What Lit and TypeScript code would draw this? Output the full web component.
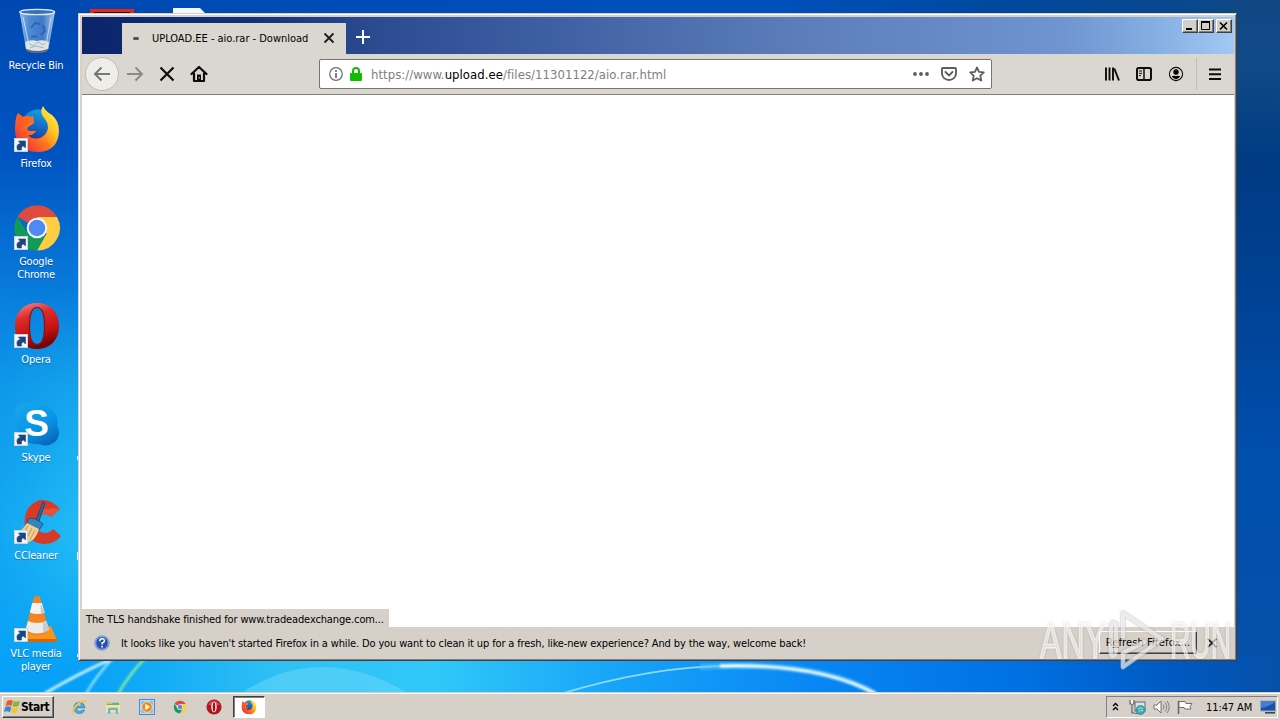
import {css, html, LitElement, svg} from 'lit';
import {customElement, property} from 'lit/decorators.js';

const shortcutBadge = svg`
  <rect x="1.500" y="32.500" width="13" height="13" fill="#f4f6f8" stroke="#c9d3dc"/>
  <path d="M4.500 44Q2.500 38 7.500 37.500L5.500 35H12.500V42L10.500 40Q7.500 40.500 8.500 44z" fill="#1c4580" stroke="#1c4580" stroke-width=".6"/>
`;

const firefoxArt = svg`
  <defs>
    <linearGradient id="ff-body" x1=".9" y1=".1" x2=".15" y2=".8">
      <stop offset="0" stop-color="#fff04a"/><stop offset=".35" stop-color="#ffc022"/>
      <stop offset=".62" stop-color="#ff7a1c"/><stop offset="1" stop-color="#f03838"/>
    </linearGradient>
    <linearGradient id="ff-globe" x1=".6" y1="0" x2=".3" y2="1">
      <stop offset="0" stop-color="#10a4e0"/><stop offset=".5" stop-color="#1668c8"/><stop offset="1" stop-color="#203080"/>
    </linearGradient>
  </defs>
  <circle cx="25" cy="20" r="16.500" fill="url(#ff-globe)"/>
  <path d="M5 7L10 11Q15 9 18 11L20 10 21 17Q18 19 15 21 13 24 17 25H23Q20 30 15 29 19 34 27 32 34 29 35 22 35 16 31 12 26 6 30 0 33 6 39 9 46 15 46 25 45 46 24 46 2 45 2 23 2 12 5 7z" fill="url(#ff-body)"/>
  <path d="M5 7L10 11Q15 9 18 11L20 10 21 17Q12 16 7 24 3 20 5 7z" fill="#f8502c" opacity=".6"/>
`;

const chromeArt = svg`
  <path d="M24 24L4.500 12.700A22.500 22.500 0 0 1 44 13z" fill="#dc4b3e"/>
  <path d="M24 13h20A22.500 22.500 0 0 1 24 46.500L33.500 29.500z" fill="#ffcd40"/>
  <path d="M4.500 12.700L14.500 29.500 24 34 33.500 29.500 24 46.500A22.500 22.500 0 0 1 4.500 12.700z" fill="#109c58"/>
  <circle cx="24" cy="24" r="10.300" fill="#f4f6f8"/>
  <circle cx="24" cy="24" r="8.300" fill="#4f8af4"/>
`;

const operaArt = svg`
  <defs>
    <linearGradient id="op-ring" x1="0" y1="0" x2=".3" y2="1">
      <stop offset="0" stop-color="#f09090"/><stop offset=".35" stop-color="#dc2c2c"/>
      <stop offset=".75" stop-color="#c41010"/><stop offset="1" stop-color="#7c0404"/>
    </linearGradient>
  </defs>
  <path fill-rule="evenodd" d="M24 1C38 1 46 11 46 24S38 47 24 47 2 37 2 24 10 1 24 1zm0 4.500c-6 0-7.500 8-7.500 18.500S18 42.500 24 42.500 31.500 34.500 31.500 24 30 5.500 24 5.500z" fill="url(#op-ring)"/>
  <path d="M24 5.500c-6 0-7.500 8-7.500 18.500S18 42.500 24 42.500 31.500 34.500 31.500 24 30 5.500 24 5.500z" fill="none" stroke="#8a1010" stroke-width="1.200"/>
`;

const desktopArt: Record<string, unknown> = {
  bin: svg`
    <defs>
      <linearGradient id="bin-glass" x1="0" x2="1">
        <stop offset="0" stop-color="#b8d4f0"/><stop offset=".25" stop-color="#5f96d8"/>
        <stop offset=".65" stop-color="#4a80cc"/><stop offset="1" stop-color="#c4dcf4"/>
      </linearGradient>
    </defs>
    <g transform="translate(0 -2)">
      <path d="M6.500 6L13 43q10 5 22.500 0L42 6z" fill="url(#bin-glass)" opacity=".85"/>
      <path d="M12 36q6-3 12-1 6-2 12 1l-1 7q-10 4-22 0z" fill="#dce4e8"/>
      <path d="M15 37l5 3 5-4 5 3 4-3M17 42l6-2 8 2" stroke="#a8b4bc" fill="none"/>
      <path d="M13 43q11 5 22 0l-1 2.500q-10 3-20 0z" fill="#786c60"/>
      <ellipse cx="24.200" cy="6" rx="17.500" ry="2.700" fill="#3a70b8" stroke="#dcebf8" stroke-width="1.300"/>
      <path d="M10 11l6 28M38 11l-5 28" stroke="#e4f0fc" opacity=".7"/>
      <path d="M18 22l4-5 5 1M30 19l2 6-4 4M24 30l-6 1" stroke="#2458a8" stroke-width="2" fill="none" opacity=".7"/>
    </g>
  `,
  firefox: svg`${firefoxArt}${shortcutBadge}`,
  chrome: svg`${chromeArt}${shortcutBadge}`,
  opera: svg`${operaArt}${shortcutBadge}`,
  skype: svg`
    <defs>
      <linearGradient id="sk-cloud" x1=".1" y1="0" x2=".7" y2="1">
        <stop offset="0" stop-color="#18a8ec"/><stop offset=".6" stop-color="#0894e4"/><stop offset="1" stop-color="#0668c0"/>
      </linearGradient>
    </defs>
    <path d="M14 3q6 0 8 1 16-1 22 13 1 5 0 8 5 10-2 17-8 6-16 2-14 2-21-12-2-6-1-10Q-1 12 5 6q4-3 9-3z" fill="url(#sk-cloud)"/>
    <text class="skype-mark" x="23.500" y="35.500" text-anchor="middle">S</text>
    ${shortcutBadge}
  `,
  ccleaner: svg`
    <path d="M47 11L38 19q-4-4-9-2-7 3-6 11 2 7 9 7 5 0 8-4l8 7q-6 8-17 8-16-1-19-16Q9 8 27 2q12-1 20 9z" fill="#d83a28"/>
    <path d="M47 11L38 19q-4-4-9-2l-3-4q10-4 21-2z" fill="#e85c40" opacity=".7"/>
    <path d="M30 4l2 1-6 18-3-1z" fill="#286ca4" stroke="#184c80"/>
    <path d="M15 21q5-3 15 5l-4 6q-5-4-12-5z" fill="#3484bc" stroke="#1c5484"/>
    <path d="M14 25l12 6q-3 12-13 14L1 37q8-4 13-12z" fill="#f0d090"/>
    <path d="M15 28L8 38M19 30l-6 12M22 32l-5 10" stroke="#c49850"/>
    ${shortcutBadge}
  `,
  vlc: svg`
    <path d="M14 30h24l6 14H12z" fill="#f89418"/>
    <path d="M12 43h32v3H13z" fill="#d86404"/>
    <path d="M21 1q3-2 6 0l9 34q-6 5-14 4-6-1-10-4z" fill="#f48420"/>
    <path d="M19.300 7h9.500l3 9.500q-7.500 3-15 0z" fill="#f2f2f0"/>
    <path d="M15 25q9 4 18.500 0l2.500 9q-12 7-23.500 0z" fill="#ececea"/>
    <path d="M27.500 7l4.300 9.500-4 1zM30 26l3.500-1 2.500 9-6 3z" fill="#c8ccd0"/>
    ${shortcutBadge}
  `,
};

const DESKTOP_ITEMS = [
  {art: 'bin', lines: ['Recycle Bin']},
  {art: 'firefox', lines: ['Firefox']},
  {art: 'chrome', lines: ['Google', 'Chrome']},
  {art: 'opera', lines: ['Opera']},
  {art: 'skype', lines: ['Skype']},
  {art: 'ccleaner', lines: ['CCleaner']},
  {art: 'vlc', lines: ['VLC media', 'player']},
];

/** Column of shortcuts down the left edge of the desktop. */
@customElement('desktop-icons')
export class DesktopIcons extends LitElement {
  render() {
    return DESKTOP_ITEMS.map(
      ({art, lines}) => html`
        <div class="item">
          <svg viewBox="0 0 48 48" width="48" height="48">${desktopArt[art]}</svg>
          <div class="label">${lines.map((line) => html`<span>${line}</span>`)}</div>
        </div>
      `,
    );
  }

  static styles = css`
    :host {
      display: flex;
      flex-direction: column;
      width: 72px;
      padding-top: 8px;
    }

    .item {
      display: flex;
      flex: none;
      flex-direction: column;
      align-items: center;
      gap: 3px;
      height: 98px;
    }

    svg {
      flex: none;
      margin-left: 2px;
    }

    .label {
      display: flex;
      flex-direction: column;
      align-items: center;
      color: #fff;
      font: 11px/13px "DejaVu Sans Condensed", "DejaVu Sans", sans-serif;
      letter-spacing: -0.2px;
      white-space: nowrap;
      text-shadow: 0 1px 1px rgba(0, 30, 90, 0.4);
    }

    .skype-mark {
      font: bold 37px "Liberation Sans", sans-serif;
      fill: #fff;
    }
  `;
}

/** Browser window: title strip with one tab, navigation bar, page, notification bar. */
@customElement('browser-window')
export class BrowserWindow extends LitElement {
  @property() tabTitle = '';

  render() {
    return html`
      <div class="titlebar">
        <div class="tab">
          <i class="throbber"></i>
          <span class="tab-title">${this.tabTitle}</span>
          <svg class="tab-close" width="12" height="12" viewBox="0 0 12 12"><path d="M1.500 1.500l9 9M10.500 1.500l-9 9" stroke="#1c1c1c" stroke-width="1.800"/></svg>
        </div>
        <svg class="new-tab" width="16" height="16" viewBox="0 0 16 16"><path d="M8 1v14M1 8h14" stroke="#fff" stroke-width="2"/></svg>
        <div class="controls">
          <div class="control"><svg width="14" height="12"><path d="M3 9h6" stroke="#000" stroke-width="2"/></svg></div>
          <div class="control"><svg width="14" height="12"><path d="M2.500 2v7.500h8V2" stroke="#000" fill="none"/><path d="M2 2h9" stroke="#000" stroke-width="2"/></svg></div>
          <div class="control close"><svg width="14" height="12"><path d="M3 2.500l7 7M10 2.500l-7 7" stroke="#000" stroke-width="1.600"/></svg></div>
        </div>
      </div>

      <div class="toolbar">
        <div class="back"><svg width="18" height="16" viewBox="0 0 18 16"><path d="M17 8H2M8.500 1.500L2 8l6.500 6.500" stroke="#777" stroke-width="2" fill="none"/></svg></div>
        <svg class="forward" width="18" height="16" viewBox="0 0 18 16"><path d="M1 8h15M9.500 1.500L16 8l-6.500 6.500" stroke="#8c8a86" stroke-width="2" fill="none"/></svg>
        <svg class="stop" width="16" height="16" viewBox="0 0 16 16"><path d="M1.500 1.500l13 13M14.500 1.500l-13 13" stroke="#0c0c0c" stroke-width="2.200"/></svg>
        <svg class="home" width="18" height="18" viewBox="0 0 18 18">
          <path d="M1.500 9L9 2l7.500 7M4 8.500V16h10V8.500" stroke="#0c0c0c" stroke-width="2.200" fill="none" stroke-linecap="round" stroke-linejoin="round"/>
          <path d="M7 9.500h4V16H7z" fill="#0c0c0c"/><path d="M9.200 12v1.500" stroke="#ddd"/>
        </svg>

        <div class="urlbar">
          <svg width="14" height="14" viewBox="0 0 14 14"><circle cx="7" cy="7" r="6.300" fill="none" stroke="#6c6c6c" stroke-width="1.200"/><path d="M7 3v2M7 6v5" stroke="#6c6c6c" stroke-width="1.700"/></svg>
          <svg class="lock" width="12" height="14" viewBox="0 0 12 14"><path d="M3 7V4a3 3 0 0 1 6 0v3" fill="none" stroke="#12bc00" stroke-width="2"/><rect y="6" width="12" height="8" rx="1" fill="#12bc00"/></svg>
          <span class="url">https://www.<b>upload.ee</b>/files/11301122/aio.rar.html</span>
          <svg class="dots" width="16" height="6" viewBox="0 0 16 6"><circle cx="2" cy="3" r="1.900"/><circle cx="8" cy="3" r="1.900"/><circle cx="14" cy="3" r="1.900"/></svg>
          <svg width="16" height="14" viewBox="0 0 16 14"><path d="M2 1h12q1 0 1 1v4.500a7 6.500 0 0 1-14 0V2q0-1 1-1z" fill="none" stroke="#5e5e5e" stroke-width="1.900"/><path d="M4.500 5L8 8.500 11.500 5" fill="none" stroke="#5e5e5e" stroke-width="1.900" stroke-linecap="round"/></svg>
          <svg width="16" height="16" viewBox="0 0 16 16"><path d="M8 1.500l2 4.300 4.800.6-3.500 3.300.9 4.800L8 12.200l-4.200 2.300.9-4.800L1.200 6.400 6 5.800z" fill="none" stroke="#5e5e5e" stroke-width="1.800" stroke-linejoin="round"/></svg>
        </div>

        <div class="tools">
          <svg width="16" height="16" viewBox="0 0 16 16"><path d="M2 1.500v13M5.500 1.500v13M9 1.500v13" stroke="#0c0c0c" stroke-width="1.900"/><path d="M10.300 2.500l4.700 12" stroke="#0c0c0c" stroke-width="1.900"/></svg>
          <svg width="16" height="14" viewBox="0 0 16 14"><rect x="1" y="1" width="14" height="12" rx="1.800" fill="none" stroke="#0c0c0c" stroke-width="2"/><path d="M8 1v12" stroke="#0c0c0c" stroke-width="1.500"/><path d="M3 4h3M3 6.300h3M3 8.600h2" stroke="#0c0c0c"/></svg>
          <svg width="16" height="16" viewBox="0 0 16 16"><circle cx="8" cy="8" r="6.600" fill="none" stroke="#0c0c0c" stroke-width="1.100"/><circle cx="8" cy="6" r="2.700"/><path d="M3.800 10.300q1.700-.8 2.700-.5 1.500.8 3 0 1-.3 2.700.5-1.400 2.900-4.200 2.900t-4.200-2.900z"/></svg>
          <i class="divider"></i>
          <svg width="12" height="12" viewBox="0 0 12 12"><path d="M0 1.500h12M0 6.200h12M0 11h12" stroke="#0c0c0c" stroke-width="2"/></svg>
        </div>
      </div>

      <div class="page"><div class="status">The TLS handshake finished for www.tradeadexchange.com...</div></div>

      <div class="notice">
        <svg width="16" height="16" viewBox="0 0 16 16">
          <circle cx="8" cy="8" r="7.300" fill="#2450b0" stroke="#8ca8dc"/>
          <circle cx="8" cy="8" r="6.300" fill="none" stroke="#e4ecf8" stroke-width=".6"/>
          <path d="M5.700 6.200q.1-2.400 2.400-2.400t2.300 2Q10.400 7.500 8.100 8v1.500" fill="none" stroke="#fff" stroke-width="1.500"/><path d="M8.100 10.700v1.700" stroke="#fff" stroke-width="1.600"/>
        </svg>
        <span class="message">It looks like you haven't started Firefox in a while. Do you want to clean it up for a fresh, like-new experience? And by the way, welcome back!</span>
        <div class="refresh">R<u>e</u>fresh Firefox...</div>
        <svg class="dismiss" width="10" height="10" viewBox="0 0 10 10"><path d="M.8.8l8.400 8.400M9.200.8L.8 9.200" stroke="#222" stroke-width="1.700"/></svg>
      </div>
    `;
  }

  static styles = css`
    :host {
      display: flex;
      flex-direction: column;
      box-sizing: border-box;
      padding: 2px;
      border: 1px solid;
      border-color: #d4d0c8 #404040 #404040 #d4d0c8;
      background: #d6d0c9;
      box-shadow: inset 1px 1px #fff, inset -1px -1px #808080;
      color: #000;
      font: 11px/13px "DejaVu Sans Condensed", "DejaVu Sans", sans-serif;
      white-space: nowrap;
    }

    svg {
      flex: none;
      display: block;
    }

    .titlebar {
      display: flex;
      height: 37px;
      margin: 1px 0 0 1px;
      background: linear-gradient(90deg, #0b256c 0, #14307a 15%, #2b4a90 25%, #3e5ea2 40%, #5c7dba 62%, #6f94cf 85%, #84aee2 93%, #a2c8f4 100%);
    }

    .tab {
      display: flex;
      align-items: center;
      box-sizing: border-box;
      width: 224px;
      margin: 6px 0 0 40px;
      padding: 0 11px 1px 11px;
      background: #dad7d1;
    }

    .throbber {
      width: 6px;
      height: 3px;
      border-radius: 2px;
      background: #555;
    }

    .tab-title {
      flex: 1;
      margin-left: 13px;
      letter-spacing: -0.02px;
    }

    .new-tab {
      margin: 12px 0 0 9px;
    }

    .controls {
      display: flex;
      margin: 2px 2px 0 auto;
    }

    .control {
      box-sizing: border-box;
      width: 16px;
      height: 14px;
      border: 1px solid;
      border-color: #fff #404040 #404040 #fff;
      background: #d4d0c8;
      box-shadow: inset -1px -1px #808080;
    }

    .close {
      margin-left: 2px;
    }

    .toolbar {
      display: flex;
      align-items: center;
      box-sizing: border-box;
      height: 41px;
      margin-left: 1px;
      padding-left: 3px;
      border-bottom: 1px solid #817c76;
      background: #dad7d1;
    }

    .back {
      display: flex;
      align-items: center;
      justify-content: center;
      box-sizing: border-box;
      width: 34px;
      height: 34px;
      border: 1px solid #bfbcb6;
      border-radius: 50%;
      background: #efedea;
    }

    .forward {
      margin-left: 7px;
    }

    .stop {
      margin-left: 15px;
    }

    .home {
      margin-left: 15px;
    }

    .urlbar {
      display: flex;
      align-items: center;
      gap: 12px;
      box-sizing: border-box;
      width: 673px;
      height: 30px;
      margin-left: 111px;
      padding: 0 6px 0 9px;
      border: 1px solid #77736d;
      border-radius: 2px;
      background: #fff;
    }

    .lock {
      margin: 0 -3px 0 -5px;
    }

    .url {
      flex: 1;
      padding-top: 1px;
      color: #808080;
      font-size: 13px;
      line-height: 16px;
      letter-spacing: 0.04px;
    }

    .url b {
      color: #000;
      font-weight: normal;
    }

    .dots {
      fill: #5e5e5e;
    }

    .tools {
      display: flex;
      align-items: center;
      gap: 16px;
      margin-left: auto;
      padding-right: 13px;
    }

    .divider {
      width: 1px;
      height: 32px;
      margin: 0 -4px 0 -4px;
      background: #c0bcb6;
    }

    .page {
      display: flex;
      flex: 1;
      align-items: flex-end;
      margin-left: 1px;
      background: #fff;
    }

    .status {
      box-sizing: border-box;
      width: 307px;
      height: 18px;
      padding: 4px 0 0 4px;
      background: #d6d0c9;
      letter-spacing: -0.13px;
    }

    .notice {
      display: flex;
      align-items: center;
      box-sizing: border-box;
      height: 31px;
      padding: 0 17px 0 13px;
    }

    .message {
      flex: 1;
      margin-left: 11px;
      padding-top: 2px;
      letter-spacing: -0.138px;
    }

    .refresh {
      box-sizing: border-box;
      width: 98px;
      height: 23px;
      padding-top: 4px;
      border: 1px solid;
      border-color: #fff #404040 #404040 #fff;
      box-shadow: inset -1px -1px #808080;
      text-align: center;
      letter-spacing: 0.1px;
    }

    .dismiss {
      margin-left: 10px;
    }
  `;
}

const launchers: unknown[] = [
  svg`
    <path d="M42 27H17q1 10 9 10 5 0 7-4h8q-4 11-16 11Q9 43 8 27 8 11 25 9q16 1 17 18zM17 21h16q-1-7-8-7-7 1-8 7z" fill="#48a8e4" stroke="#1c78bc" stroke-width="1.500" fill-rule="evenodd"/>
    <path d="M6 45Q-2 38 10 22 26 3 41 3q7 2 2 11 0-5-5-5-12 2-24 17Q5 39 9 42q4 2 9-2-6 7-12 5z" fill="#f4c83c"/>
  `,
  svg`
    <path d="M3 8h15l3 4h22v28H3z" fill="#e8c868"/>
    <path d="M6 14h14l3-3h19v8H6z" fill="#5cb878"/>
    <path d="M3 18h42v22H3z" fill="#f8e498"/>
    <path d="M9 45V29q0-3 3-3h24q3 0 3 3v16h-7V33H16v12z" fill="#6cb4e0"/>
  `,
  svg`
    <rect x="1.500" y="1.500" width="45" height="45" fill="#b8d8f4" stroke="#4c8cd0" stroke-width="3"/>
    <rect x="7" y="7" width="34" height="34" fill="#7cb4e8"/>
    <circle cx="24" cy="24" r="16" fill="#f48810" stroke="#fff" stroke-width="2"/>
    <path d="M19 14l14 10-14 10z" fill="#fff"/>
  `,
  svg`<g transform="translate(4 4) scale(.84)">${chromeArt}</g>`,
  svg`
    <circle cx="24" cy="24" r="22" fill="#b81420" stroke="#881018"/>
    <path d="M7 18q4-12 17-13 13 1 17 13z" fill="#e86c6c" opacity=".6"/>
    <ellipse cx="24" cy="24" rx="8" ry="16" fill="#fff"/><ellipse cx="24" cy="24" rx="4" ry="14" fill="#a81018"/>
  `,
];

@customElement('task-bar')
export class TaskBar extends LitElement {
  @property() clock = '';

  render() {
    return html`
      <div class="start">
        <svg width="17" height="16" viewBox="0 0 17 16">
          <path d="M3 2q3-2 6-.3L7.500 7Q5 5.500 1.500 7z" fill="#ec5c28"/><path d="M10 2q3 1.500 6-.2L14.500 7q-3 1.500-6 .2z" fill="#7cbc30"/>
          <path d="M1.200 8.200Q4 6.500 7.200 8.200L6 13.200q-3-1.800-6-.2z" fill="#3c84d8"/><path d="M8.200 8.500q3 1.500 6 .1L13 13.500q-3 1.500-6 .1z" fill="#f8c428"/>
        </svg>
        <span>Start</span>
      </div>
      <div class="launchers">
        ${launchers.map((art) => html`<svg width="16" height="16" viewBox="0 0 48 48">${art}</svg>`)}
      </div>
      <div class="running"><svg width="16" height="16" viewBox="0 0 48 48">${firefoxArt}</svg></div>
      <div class="tray">
        <svg class="expand" width="7" height="9" viewBox="0 0 7 9"><path d="M1 4l2.500-2.500L6 4M1 8l2.500-2.500L6 8" fill="none" stroke="#000" stroke-width="1.400"/></svg>
        <svg class="network" width="17" height="16" viewBox="0 0 17 16">
          <path d="M1 1v4h4V1M3 5v9h3" fill="none" stroke="#666" stroke-width="1.200"/><path d="M2 1v3.500h2V1z" fill="#fff"/>
          <rect x="6" y="3" width="10" height="9" fill="#d8e4e8" stroke="#606870"/><path d="M6 14.500h6" stroke="#606870"/>
          <circle cx="11.500" cy="11" r="4.500" fill="#3ca8b4" stroke="#287884" stroke-width=".6"/><path d="M9 10q3-3 5 0M9.500 13q2-3 4.500-1" stroke="#b4e8e8" fill="none"/>
        </svg>
        <svg class="volume" width="17" height="14" viewBox="0 0 17 14"><path d="M1 5h3l4-4v12L4 9H1z" fill="#fff" stroke="#707070"/><path d="M10 4.500q2 2.500 0 5M12 2.500q3.500 4.500 0 9M14 1q4.500 6 0 12" fill="none" stroke="#808080"/></svg>
        <svg class="flag" width="16" height="15" viewBox="0 0 16 15"><path d="M1.500 14V1" stroke="#666" stroke-width="1.500"/><path d="M2 1.500h6l1 2h6l-2 3 1 2.500H8l-1-1.500H2z" fill="#fff" stroke="#707070"/></svg>
        <span class="clock">${this.clock}</span>
        <svg width="16" height="14" viewBox="0 0 16 14"><rect x=".5" y="1" width="15" height="10" fill="#1c50a8" stroke="#98a8b8"/><path d="M1 8Q8 7 15 2v-.5H1z" fill="#4080d8"/><path d="M5 12.800h10" stroke="#384858" stroke-width="1.600"/></svg>
      </div>
    `;
  }

  static styles = css`
    :host {
      display: flex;
      box-sizing: border-box;
      height: 28px;
      padding: 3px 2px 2px;
      border-top: 1px solid #d4d0c8;
      background: #d6d0c8;
      box-shadow: inset 0 1px #fff;
      font: 11px/13px "DejaVu Sans Condensed", "DejaVu Sans", sans-serif;
    }

    svg {
      flex: none;
      display: block;
    }

    .start {
      display: flex;
      align-items: center;
      box-sizing: border-box;
      width: 52px;
      height: 22px;
      padding-left: 1px;
      border: 1px solid;
      border-color: #fff #404040 #404040 #fff;
      box-shadow: inset -1px -1px #808080;
      font-size: 12px;
      font-weight: bold;
      letter-spacing: -0.5px;
    }

    .launchers {
      display: flex;
      align-items: center;
      gap: 17.800px;
      margin: 0 11px 0 17px;
    }

    .running {
      display: flex;
      align-items: center;
      justify-content: center;
      box-sizing: border-box;
      width: 32px;
      height: 22px;
      border: 1px solid;
      border-color: #404040 #fff #fff #404040;
      background: #fff;
      box-shadow: inset 1px 1px #808080;
    }

    .tray {
      display: flex;
      align-items: center;
      box-sizing: border-box;
      width: 172px;
      height: 22px;
      margin-left: auto;
      padding: 0 1px 0 5px;
      border: 1px solid;
      border-color: #808080 #fff #fff #808080;
    }

    .expand {
      margin-bottom: 2px;
    }

    .network {
      margin-left: 10px;
    }

    .volume {
      margin-left: 7px;
    }

    .flag {
      margin-left: 7px;
    }

    .clock {
      flex: 1;
      margin-left: 13px;
      white-space: nowrap;
      letter-spacing: -0.1px;
    }
  `;
}

@customElement('app-root')
export class AppRoot extends LitElement {
  #wallpaper() {
    return html`
      <svg class="wallpaper" width="1280" height="720" viewBox="0 0 1280 720">
        <defs>
          <linearGradient id="sky-left" x1="0" y1="0" x2="0" y2="1">
            <stop offset="0" stop-color="#0048b0"/><stop offset=".22" stop-color="#0054c2"/>
            <stop offset=".4" stop-color="#0878da"/><stop offset=".55" stop-color="#0e98ea"/>
            <stop offset=".75" stop-color="#14a8f2"/><stop offset="1" stop-color="#06a0f8"/>
          </linearGradient>
          <linearGradient id="sky-left-glow" x1="0" x2="1">
            <stop offset="0" stop-color="#30d0f8" stop-opacity="0"/><stop offset="1" stop-color="#30d0f8" stop-opacity=".5"/>
          </linearGradient>
          <linearGradient id="glow-fade" x1="0" y1="0" x2="0" y2="1">
            <stop offset=".4" stop-color="#000"/><stop offset=".75" stop-color="#fff"/><stop offset=".93" stop-color="#000"/>
          </linearGradient>
          <mask id="lower"><rect width="80" height="720" fill="url(#glow-fade)"/></mask>
          <linearGradient id="sky-bottom" x1="0" x2="1">
            <stop offset=".06" stop-color="#06a0f8"/><stop offset=".12" stop-color="#12acf6"/>
            <stop offset=".22" stop-color="#30c0f4"/><stop offset=".34" stop-color="#30c8f8"/>
            <stop offset=".48" stop-color="#18a4f8"/><stop offset=".64" stop-color="#0886f4"/>
            <stop offset=".8" stop-color="#0070e2"/><stop offset=".92" stop-color="#0058c0"/>
            <stop offset="1" stop-color="#0650a8"/>
          </linearGradient>
          <linearGradient id="sky-top" x1="0" x2="1">
            <stop offset="0" stop-color="#0048b0"/><stop offset=".6" stop-color="#0050bc"/>
            <stop offset=".8" stop-color="#00489c"/><stop offset="1" stop-color="#104884"/>
          </linearGradient>
          <linearGradient id="sky-right" x1="0" y1="0" x2="0" y2="1">
            <stop offset="0" stop-color="#104884"/><stop offset=".1" stop-color="#104a86"/>
            <stop offset=".24" stop-color="#003a82"/><stop offset=".5" stop-color="#00449a"/>
            <stop offset=".7" stop-color="#0050ae"/><stop offset="1" stop-color="#0650a8"/>
          </linearGradient>
          <filter id="soft"><feGaussianBlur stdDeviation="1"/></filter>
        </defs>
        <rect width="1280" height="20" fill="url(#sky-top)"/>
        <rect x="1230" width="50" height="665" fill="url(#sky-right)"/>
        <rect y="655" width="1280" height="45" fill="url(#sky-bottom)"/>
        <rect width="80" height="700" fill="url(#sky-left)"/>
        <rect width="80" height="700" fill="url(#sky-left-glow)" mask="url(#lower)"/>
        <path d="M240 694Q320 640 410 694z" fill="#70dcfa" opacity=".45"/>
        <g fill="none" filter="url(#soft)">
          <path d="M44 694Q75 675 116 657" stroke="#c8f4ff" stroke-width="3"/>
          <path d="M86 694Q96 676 114 657" stroke="#8ce4fc" stroke-width="2.500"/>
          <path d="M118 694Q128 676 146 657" stroke="#8cf098" stroke-width="2.500"/>
        </g>
        <path d="M560 694Q660 664 742 666" stroke="#8cdcff" stroke-width="1.800" fill="none"/>
        <path d="M700 667Q820 660 876 694" stroke="#58c8ff" stroke-width="6" opacity=".6" fill="none" filter="url(#soft)"/>
        <path d="M720 666Q820 663 876 694" stroke="#fff" stroke-width="2.800" fill="none" filter="url(#soft)"/>
        <path d="M90 9h44v5H90z" fill="#e02818"/><path d="M94 12h36v2H94z" fill="#301018"/>
        <path d="M173 8h27l6 6h-33z" fill="#f4f8fc"/>
        <path d="M77 456h1v4h-1zM77 552h1v8h-1zM77 654h1v3h-1z" fill="#e8f6ff"/>
      </svg>
    `;
  }

  #watermark() {
    return html`
      <svg class="watermark" width="210" height="68" viewBox="0 0 210 68">
        <text class="mark" x="2" y="51" textLength="66" lengthAdjust="spacingAndGlyphs">ANY</text>
        <text class="mark" x="132" y="51" textLength="61" lengthAdjust="spacingAndGlyphs">RUN</text>
        <path class="play-edge" d="M73 20V46Q73 51 77 48M85 30V6L124 32 85 60V46L106 35M73 20Q74 13 78 17V44"/>
        <path class="play" d="M73 20V46Q73 51 77 48M85 30V6L124 32 85 60V46L106 35M73 20Q74 13 78 17V44"/>
      </svg>
    `;
  }

  render() {
    return html`
      ${this.#wallpaper()}
      <desktop-icons></desktop-icons>
      <browser-window class="window" tabTitle="UPLOAD.EE - aio.rar - Download"></browser-window>
      ${this.#watermark()}
      <task-bar clock="11:47 AM"></task-bar>
    `;
  }

  static styles = css`
    :host {
      position: relative;
      display: flex;
      flex-direction: column;
      width: 1280px;
      height: 720px;
      overflow: hidden;
    }

    .wallpaper {
      position: absolute;
      inset: 0;
    }

    desktop-icons,
    task-bar {
      position: relative;
    }

    desktop-icons {
      flex: 1 1 0;
      min-height: 0;
    }

    task-bar {
      flex: none;
    }

    .window {
      position: absolute;
      left: 78px;
      top: 13px;
      width: 1159px;
      height: 648px;
    }

    .watermark {
      position: absolute;
      left: 1038px;
      top: 607px;
      filter: drop-shadow(0 0 1px rgba(0, 0, 0, 0.2));
    }

    .mark {
      fill: rgba(255, 255, 255, 0.55);
      stroke: rgba(255, 255, 255, 0.55);
      stroke-width: 1.800px;
      font: 50px "Liberation Sans Narrow", "Liberation Sans", sans-serif;
    }

    .play,
    .play-edge {
      fill: none;
      stroke: rgba(255, 255, 255, 0.55);
      stroke-width: 4px;
      stroke-linejoin: round;
      stroke-linecap: round;
    }

    .play-edge {
      stroke: rgba(200, 200, 200, 0.4);
      stroke-width: 5.500px;
    }
  `;
}
